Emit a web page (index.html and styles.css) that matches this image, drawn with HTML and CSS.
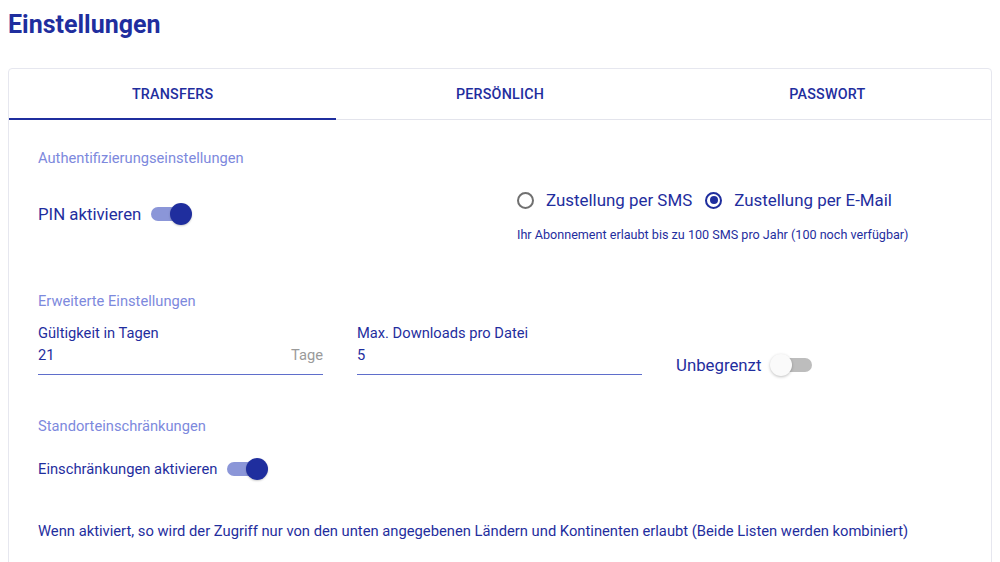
FILE: index.html
```html
<!DOCTYPE html>
<html lang="de">
<head>
<meta charset="utf-8">
<title>Einstellungen</title>
<link rel="stylesheet" href="styles.css">
</head>
<body>
<h1 class="page-title">Einstellungen</h1>
<div class="card">
  <div class="tabs">
    <div class="tab active">TRANSFERS</div>
    <div class="tab">PERSÖNLICH</div>
    <div class="tab">PASSWORT</div>
  </div>
  <div class="content">
    <div class="section-title">Authentifizierungseinstellungen</div>
    <div class="auth-row">
      <div class="auth-left">
        <span class="big-label">PIN aktivieren</span>
        <span class="toggle on"><span class="track"></span><span class="thumb"></span></span>
      </div>
      <div class="auth-right">
        <div class="radios">
          <label class="radio"><span class="circle"></span><span class="radio-text">Zustellung per SMS</span></label>
          <label class="radio"><span class="circle checked"></span><span class="radio-text">Zustellung per E-Mail</span></label>
        </div>
        <div class="hint">Ihr Abonnement erlaubt bis zu 100 SMS pro Jahr (100 noch verfügbar)</div>
      </div>
    </div>

    <div class="section-title s2">Erweiterte Einstellungen</div>
    <div class="fields-row">
      <div class="field">
        <div class="field-label">Gültigkeit in Tagen</div>
        <div class="field-input"><span class="value">21</span><span class="suffix">Tage</span></div>
      </div>
      <div class="field">
        <div class="field-label">Max. Downloads pro Datei</div>
        <div class="field-input"><span class="value">5</span></div>
      </div>
      <div class="unlimited">
        <span class="big-label">Unbegrenzt</span>
        <span class="toggle off"><span class="track"></span><span class="thumb"></span></span>
      </div>
    </div>

    <div class="section-title s3">Standorteinschränkungen</div>
    <div class="restrict-row">
      <span class="mid-label">Einschränkungen aktivieren</span>
      <span class="toggle on"><span class="track"></span><span class="thumb"></span></span>
    </div>

    <p class="info">Wenn aktiviert, so wird der Zugriff nur von den unten angegebenen Ländern und Kontinenten erlaubt (Beide Listen werden kombiniert)</p>
  </div>
</div>
</body>
</html>
```

FILE: styles.css
```css
html, body {
  margin: 0;
  background: #ffffff;
}
body {
  padding: 8px 8px 0 8px;
  font-family: Roboto, "Liberation Sans", Arial, sans-serif;
  color: #1f2e9e;
  overflow: hidden;
  height: 562px;
  box-sizing: border-box;
}
.page-title {
  margin: 2px 0 28px 0;
  font-size: 25px;
  line-height: 30px;
  font-weight: 700;
  color: #1f2e9e;
}
.card {
  border: 1px solid #e6e7ef;
  border-radius: 4px;
  background: #fff;
  min-height: 600px;
}
.tabs {
  display: flex;
  height: 50px;
  border-bottom: 1px solid #e3e4ec;
}
.tab {
  flex: 1;
  display: flex;
  align-items: center;
  justify-content: center;
  font-size: 14.3px;
  font-weight: 500;
  letter-spacing: 0.2px;
  color: #1f2e9e;
  box-sizing: border-box;
}
.tab.active {
  border-bottom: 2px solid #1f2e9e;
  margin-bottom: -1px;
  padding-top: 1px;
}
.content {
  padding: 28px 30px 0 29px;
}
.section-title {
  font-size: 14.7px;
  line-height: 20px;
  color: #7d89dd;
}
.auth-row {
  display: flex;
  align-items: center;
  margin-top: 17px;
}
.auth-left {
  width: 479px;
  display: flex;
  align-items: center;
}
.big-label {
  font-size: 16.8px;
  line-height: 20px;
  color: #1f2e9e;
}
.mid-label {
  font-size: 14.75px;
  line-height: 20px;
  color: #1f2e9e;
}
.toggle {
  position: relative;
  display: inline-block;
  width: 42px;
  height: 22px;
  margin-left: 9px;
}
.toggle .track {
  position: absolute;
  left: 1px;
  top: 4px;
  width: 36px;
  height: 14px;
  border-radius: 7px;
  background: #8b96d8;
}
.toggle .thumb {
  position: absolute;
  top: 0;
  left: 20px;
  width: 22px;
  height: 22px;
  border-radius: 50%;
  background: #1f2e9e;
  box-shadow: 0 1px 2px rgba(0,0,0,0.2);
}
.toggle.off .track {
  left: 6px;
  background: #bdbdbd;
}
.toggle.off .thumb {
  left: 0;
  background: #fafafa;
  box-shadow: 0 1px 3px rgba(0,0,0,0.25);
}
.auth-right {
  display: flex;
  flex-direction: column;
}
.radios {
  display: flex;
  align-items: center;
  height: 30px;
}
.radio {
  display: flex;
  align-items: center;
  margin-right: 13px;
}
.circle {
  width: 17px;
  height: 17px;
  box-sizing: border-box;
  border: 2px solid #707070;
  border-radius: 50%;
  margin-right: 12px;
  display: flex;
  align-items: center;
  justify-content: center;
}
.circle.checked {
  border-color: #1f2e9e;
}
.circle.checked::after {
  content: "";
  width: 8px;
  height: 8px;
  border-radius: 50%;
  background: #1f2e9e;
}
.radio-text {
  font-size: 16.9px;
  line-height: 20px;
  color: #1f2e9e;
}
.hint {
  margin-top: 12px;
  font-size: 12.6px;
  line-height: 16px;
  color: #1f2e9e;
}
.s2 {
  margin-top: 48px;
}
.fields-row {
  display: flex;
  align-items: flex-end;
  gap: 34px;
  margin-top: 12px;
}
.field {
  width: 285px;
}
.field-label {
  font-size: 14.7px;
  line-height: 20px;
  color: #1f2e9e;
}
.field-input {
  display: flex;
  justify-content: space-between;
  font-size: 14.7px;
  line-height: 20px;
  margin-top: 2px;
  padding-bottom: 9px;
  border-bottom: 1px solid #5f6ecb;
}
.value {
  color: #1f2e9e;
}
.suffix {
  color: #9a9a9a;
}
.unlimited {
  display: flex;
  align-items: center;
  margin-bottom: -1px;
}
.s3 {
  margin-top: 41px;
}
.restrict-row {
  display: flex;
  align-items: center;
  margin-top: 22px;
}
.info {
  margin: 41px 0 0 0;
  font-size: 14.75px;
  line-height: 20px;
  color: #1f2e9e;
}
```
